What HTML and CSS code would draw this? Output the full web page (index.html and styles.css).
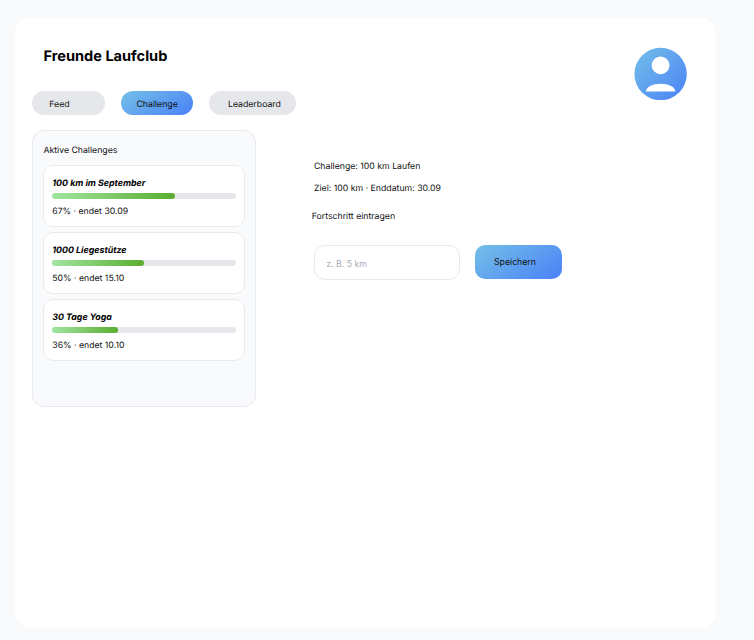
FILE: index.html
```html
<!DOCTYPE html>
<html lang="de">
<head>
<meta charset="utf-8">
<title>Freunde Laufclub</title>
<link rel="stylesheet" href="styles.css">
</head>
<body>
<main class="sheet">
  <header class="header">
    <h1 class="title">Freunde Laufclub</h1>
    <svg class="avatar" viewBox="0 0 53 53" aria-label="Profil">
      <defs><linearGradient id="blue" x1="0" y1="0" x2="1" y2="1"><stop offset="0" stop-color="#74c0e8"/><stop offset="1" stop-color="#4a81f6"/></linearGradient></defs>
      <circle cx="26.6" cy="27" r="26.2" fill="url(#blue)"/>
      <circle cx="26.6" cy="18.3" r="8.9" fill="#fff"/>
      <path d="M11.9 44.5C11.9 40 18.5 36.7 26.6 36.7S41.3 40 41.3 44.5Z" fill="#fff"/>
    </svg>
  </header>
  <nav class="tabs">
    <a class="tab tab-feed">Feed</a>
    <a class="tab tab-challenge">Challenge</a>
    <a class="tab tab-leaderboard">Leaderboard</a>
  </nav>
  <div class="content">
    <section class="panel">
      <h2 class="panel-title">Aktive Challenges</h2>
      <article class="card">
        <h3 class="card-title">100 km im September</h3>
        <div class="bar"><div class="fill" style="width:66.7%"></div></div>
        <p class="meta">67% · endet 30.09</p>
      </article>
      <article class="card">
        <h3 class="card-title">1000 Liegestütze</h3>
        <div class="bar"><div class="fill" style="width:50%"></div></div>
        <p class="meta">50% · endet 15.10</p>
      </article>
      <article class="card">
        <h3 class="card-title">30 Tage Yoga</h3>
        <div class="bar"><div class="fill" style="width:35.8%"></div></div>
        <p class="meta">36% · endet 10.10</p>
      </article>
    </section>
    <section class="detail">
      <p class="line">Challenge: 100 km Laufen</p>
      <p class="line goal">Ziel: 100 km · Enddatum: 30.09</p>
      <p class="line entry">Fortschritt eintragen</p>
      <form class="form">
        <input class="field" type="text" placeholder="z. B. 5 km">
        <button class="save" type="button">Speichern</button>
      </form>
    </section>
  </div>
</main>
</body>
</html>
```
FILE: styles.css
```css
* { box-sizing: border-box; margin: 0; padding: 0; }
body {
  height: 640px;
  overflow: hidden;
  padding: 17px 0 0 15px;
  background: #f9fafc;
  color: #111;
  font: 8.73px/12px Inter, sans-serif;
  text-rendering: geometricPrecision;
}
.sheet {
  width: 701px;
  height: 611px;
  padding: 0 0 0 17px;
  border-radius: 17px;
  background: #fff;
}
.header {
  display: flex;
  justify-content: space-between;
  align-items: flex-start;
  height: 73.6px;
  padding: 30px 29px 0 11.5px;
}
.title { font-size: 14.55px; line-height: 18px; font-weight: 700; color: #000; }
.avatar { width: 53px; height: 53px; }
.tabs { display: flex; gap: 15.7px; height: 24.9px; }
.tab { height: 24.9px; border-radius: 13px; background: #e5e7eb; line-height: 28px; }
.tab-feed { width: 72.9px; padding-left: 17.3px; }
.tab-challenge { width: 72.7px; padding-left: 15.9px; background: linear-gradient(145deg, #74c0e8, #4a81f6); }
.tab-leaderboard { width: 87.4px; padding-left: 19px; }
.content { display: flex; align-items: flex-start; padding-top: 14.5px; }
.panel {
  width: 224px;
  height: 277px;
  padding: 14px 10.4px 0;
  border: 1px solid #e8eaee;
  border-radius: 12px;
  background: #f9fafc;
}
.panel-title { margin-bottom: 8.4px; font-size: inherit; font-weight: 400; }
.card {
  width: 202px;
  height: 61.5px;
  margin-bottom: 5.4px;
  padding: 11.6px 8.3px 0;
  border: 1px solid #e8eaee;
  border-radius: 10px;
  background: #fff;
}
.panel .card { margin-left: -0.4px; }
.card-title { font-size: 8.85px; line-height: 12px; font-weight: 700; font-style: italic; color: #000; }
.bar { height: 6px; margin: 3.1px 0 7.1px; border-radius: 3px; background: #e5e7eb; }
.fill { height: 6px; border-radius: 3px; background: linear-gradient(90deg, #a0e6a0, #5aad2e); }
.meta { font-size: 8.7px; }
.detail { padding: 31px 0 0 58px; }
.goal { margin-top: 10.4px; }
.entry { margin: 15.6px 0 0 -2.3px; }
.form { display: flex; gap: 14.5px; margin-top: 21.6px; }
.field {
  width: 146px;
  height: 35.5px;
  padding: 4px 11.3px 0;
  border: 1px solid #e8eaee;
  border-radius: 11px;
  background: #fff;
  font: inherit;
}
.field::placeholder { color: #a9adb8; }
.save {
  width: 87.5px;
  height: 34.5px;
  padding: 0 0 0 19.5px;
  border: 0;
  border-radius: 10px;
  background: linear-gradient(145deg, #74c0e8, #4a81f6);
  color: #111;
  font: inherit;
  text-align: left;
}
```
